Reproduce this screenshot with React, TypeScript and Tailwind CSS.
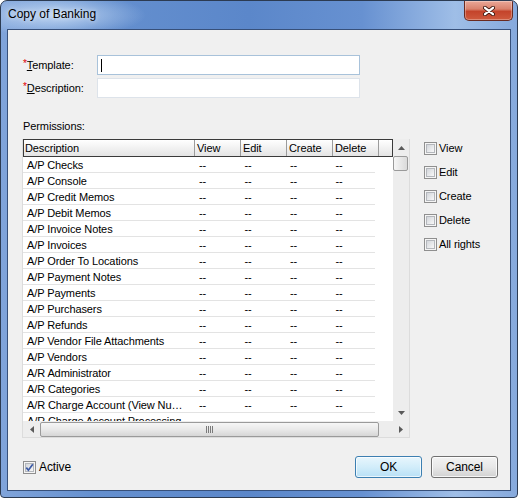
import React from "react";

const permissions = [
  "A/P Checks",
  "A/P Console",
  "A/P Credit Memos",
  "A/P Debit Memos",
  "A/P Invoice Notes",
  "A/P Invoices",
  "A/P Order To Locations",
  "A/P Payment Notes",
  "A/P Payments",
  "A/P Purchasers",
  "A/P Refunds",
  "A/P Vendor File Attachments",
  "A/P Vendors",
  "A/R Administrator",
  "A/R Categories",
  "A/R Charge Account (View Number)",
  "A/R Charge Account Processing",
];

const rights = ["View", "Edit", "Create", "Delete"];

function CheckBox({ checked }: { checked?: boolean }) {
  return (
    <span className="flex h-[13px] w-[13px] shrink-0 items-center justify-center border border-[#8f8f8f] bg-[#f5f5f5]">
      <span className="relative h-[9px] w-[9px] border border-[#b4b7bc] bg-gradient-to-br from-[#d3d6db] to-[#f8f8f8]">
        {checked && (
          <svg className="absolute -left-px -top-px" width="9" height="9" viewBox="0 0 9 9">
            <path d="M1.3 4.6 L3.4 7.2 L7.8 1.2" fill="none" stroke="#3d5ba6" strokeWidth="1.7" />
          </svg>
        )}
      </span>
    </span>
  );
}

function Arrow({ dir }: { dir: "up" | "down" | "left" | "right" }) {
  const pts = {
    up: "0,4 3.5,0 7,4",
    down: "0,0 7,0 3.5,4",
    left: "4,0 4,7 0,3.5",
    right: "0,0 0,7 4,3.5",
  }[dir];
  const vertical = dir === "up" || dir === "down";
  return (
    <svg width={vertical ? 7 : 4} height={vertical ? 4 : 7} viewBox={vertical ? "0 0 7 4" : "0 0 4 7"}>
      <polygon points={pts} fill="#5a5a5a" />
    </svg>
  );
}

export default function App() {
  return (
    <div className="h-[498px] w-[518px] bg-white">
      <div className="flex h-full w-full flex-col overflow-hidden rounded-t-[7px] rounded-b-[4px] border border-[#2c3b52] bg-[radial-gradient(ellipse_90px_22px_at_55px_14px,rgba(205,225,248,0.85),rgba(205,225,248,0)),linear-gradient(90deg,#80a4da_0%,#6590cf_18%,#5b87ca_48%,#6791d1_70%,#9fbee7_88%,#86a9dc_100%)] font-['Liberation_Sans',Arial,sans-serif] text-[11px] tracking-[-0.1px] text-black">
        {/* title bar */}
        <div className="flex h-[28px] shrink-0 items-start justify-between">
          <span className="pl-[7px] pt-[6px] text-[12px] leading-[15px] tracking-normal [text-shadow:0_0_5px_rgba(255,255,255,0.8)]">
            Copy of Banking
          </span>
          <button className="mr-[4px] flex h-[20px] w-[49px] items-center justify-center rounded-b-[5px] border border-t-0 border-[#6a2a20] bg-[linear-gradient(180deg,#eaa898_0%,#d9826d_42%,#c4442b_55%,#cf5a3e_100%)] shadow-[inset_0_0_0_1px_rgba(255,255,255,0.3)]">
            <svg width="12" height="10" viewBox="0 0 12 10">
              <path d="M2 1.8 L10 8.2 M10 1.8 L2 8.2" stroke="#3b1810" strokeWidth="4" strokeLinecap="round" />
              <path d="M2 1.8 L10 8.2 M10 1.8 L2 8.2" stroke="#fff" strokeWidth="2.3" strokeLinecap="round" />
            </svg>
          </button>
        </div>

        {/* client area */}
        <div className="flex min-h-0 flex-1 px-[6px] pb-[6px]">
          <div className="flex flex-1 flex-col border border-[#37507a] bg-[#f0f0f0] pb-[12px] pl-[15px] pr-[12px] pt-[25px]">
            <div className="grid grid-cols-[74px_263px] items-center gap-y-[3px]">
              <label className="leading-[13px]">
                <span className="align-top text-[10px] leading-[10px] text-[#e00000]">*</span>
                <u>T</u>emplate:
              </label>
              <div className="flex h-[20px] items-center border border-[#a8c2da] bg-white pl-[3px]">
                <span className="h-[13px] w-px bg-black" />
              </div>
              <label className="leading-[13px]">
                <span className="align-top text-[10px] leading-[10px] text-[#e00000]">*</span>
                <u>D</u>escription:
              </label>
              <div className="h-[20px] border border-[#dde3ea] bg-white" />
            </div>

            <div className="mt-[22px] leading-[13px]">Permissions:</div>

            <div className="mt-[6px] flex items-start">
              {/* grid */}
              <div className="-ml-px flex h-[299px] w-[388px] flex-col border border-t-0 border-[#dcdcdc] bg-white">
                <div className="flex min-h-0 flex-1">
                  <div className="flex w-[370px] flex-col">
                    <div className="flex h-[18px] shrink-0 border border-[#3a3a3a] bg-gradient-to-b from-white to-[#e4e4e4] leading-[16px]">
                      <div className="w-[171px] border-r border-[#9c9c9c] pl-px">Description</div>
                      {rights.map((r) => (
                        <div key={r} className="w-[46px] border-r border-[#9c9c9c] pl-[2px]">
                          {r}
                        </div>
                      ))}
                      <div className="flex-1" />
                    </div>
                    <div className="min-h-0 flex-1 overflow-hidden">
                      {permissions.map((p) => (
                        <div key={p} className="flex h-[16px] w-[352px] border-b border-[#e3e3e3] leading-[16px]">
                          <div className="w-[172px] truncate pl-[4px] pr-[10px]">{p}</div>
                          {rights.map((r) => (
                            <div key={r} className="w-[46px] pl-[6px]">
                              --
                            </div>
                          ))}
                        </div>
                      ))}
                    </div>
                  </div>
                  {/* vertical scrollbar */}
                  <div className="flex w-[16px] flex-col bg-[#ededed]">
                    <div className="flex h-[17px] items-center justify-center">
                      <Arrow dir="up" />
                    </div>
                    <div className="h-[15px] w-[15px] rounded-[2px] border border-[#9a9a9a] bg-gradient-to-r from-[#f6f6f6] to-[#dadada]" />
                    <div className="flex-1" />
                    <div className="flex h-[17px] items-center justify-center">
                      <Arrow dir="down" />
                    </div>
                  </div>
                </div>
                {/* horizontal scrollbar */}
                <div className="flex h-[16px] shrink-0 items-center bg-[#ededed]">
                  <div className="flex w-[17px] items-center justify-center">
                    <Arrow dir="left" />
                  </div>
                  <div className="flex h-[15px] w-[339px] items-center justify-center gap-px rounded-[2px] border border-[#9a9a9a] bg-gradient-to-b from-[#f6f6f6] via-[#e9e9e9] to-[#d6d6d6]">
                    <span className="h-[7px] w-px bg-[#7a7a7a]" />
                    <span className="h-[7px] w-px bg-[#7a7a7a]" />
                    <span className="h-[7px] w-px bg-[#7a7a7a]" />
                    <span className="h-[7px] w-px bg-[#7a7a7a]" />
                  </div>
                  <div className="flex-1" />
                  <div className="flex w-[16px] items-center justify-center">
                    <Arrow dir="right" />
                  </div>
                </div>
              </div>

              {/* rights checkboxes */}
              <div className="ml-[14px] flex flex-col gap-[11px] pt-[3px]">
                {[...rights, "All rights"].map((r) => (
                  <div key={r} className="flex h-[13px] items-center gap-[2px] leading-[13px]">
                    <CheckBox />
                    <span>{r}</span>
                  </div>
                ))}
              </div>
            </div>

            {/* footer */}
            <div className="mt-auto flex items-center justify-between">
              <div className="flex items-center gap-[3px]">
                <CheckBox checked />
                <span className="text-[12px]">Active</span>
              </div>
              <div className="flex gap-[9px]">
                <button className="h-[22px] w-[67px] rounded-[3px] border border-[#3c7fb1] bg-gradient-to-b from-[#e8f6fd] via-[#d2edfa] to-[#b8e0f6] text-[12px] shadow-[inset_0_0_0_1px_rgba(255,255,255,0.7)]">
                  OK
                </button>
                <button className="h-[22px] w-[67px] rounded-[3px] border border-[#707070] bg-gradient-to-b from-[#f3f3f3] via-[#e8e8e8] to-[#d2d2d2] text-[12px] shadow-[inset_0_0_0_1px_rgba(255,255,255,0.8)]">
                  Cancel
                </button>
              </div>
            </div>
          </div>
        </div>
      </div>
    </div>
  );
}
